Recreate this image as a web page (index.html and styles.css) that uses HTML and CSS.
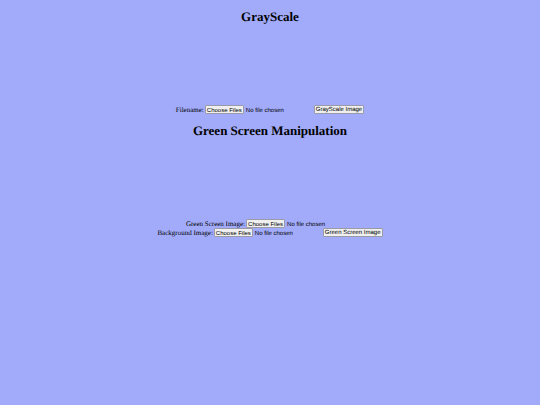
FILE: index.html
```html
<!DOCTYPE html>
<html lang="en">
<head>
<meta charset="utf-8">
<title>GrayScale</title>
<link rel="stylesheet" href="styles.css">
</head>
<body>
<section>
<h1>GrayScale</h1>
<canvas class="preview"></canvas>
<div class="row">
<label for="gray">Filename:</label>
<input type="file" id="gray" multiple>
<button type="button">GrayScale Image</button>
</div>
</section>
<section>
<h1>Green Screen Manipulation</h1>
<canvas class="preview"></canvas>
<div class="row">
<label for="green">Green Screen Image:</label>
<input type="file" id="green" multiple>
</div>
<div class="row">
<label for="back">Background Image:</label>
<input type="file" id="back" multiple>
<button type="button">Green Screen Image</button>
</div>
</section>
</body>
</html>
```

FILE: styles.css
```css
body {
  margin: 0;
  padding-top: 9px;
  background: #a2abfa;
  color: #000;
  font-family: "Liberation Serif", serif;
  font-size: 7px;
  text-rendering: geometricPrecision;
}

h1 {
  margin: 0;
  font-size: 13px;
  line-height: 16px;
  text-align: center;
}

.preview {
  display: block;
  width: 150px;
  height: 80px;
  margin: 0 auto;
}

.row {
  display: flex;
  justify-content: center;
  align-items: center;
  gap: 1px;
  height: 9px;
}

section + section {
  margin-top: 9px;
}

input,
button {
  font-family: "Liberation Sans", sans-serif;
  font-size: 6px;
  text-rendering: geometricPrecision;
}

input {
  width: 108px;
  height: 9px;
  line-height: 9px;
}

button,
input::file-selector-button {
  box-sizing: border-box;
  height: 9px;
  margin: 0;
  padding: 0 1px;
  border: 1px solid #9a9aa8;
  border-radius: 1px;
  background: #efefef;
  color: #000;
  font: 6px/8px "Liberation Sans", sans-serif;
}

input::file-selector-button {
  margin-right: 2px;
}
```
